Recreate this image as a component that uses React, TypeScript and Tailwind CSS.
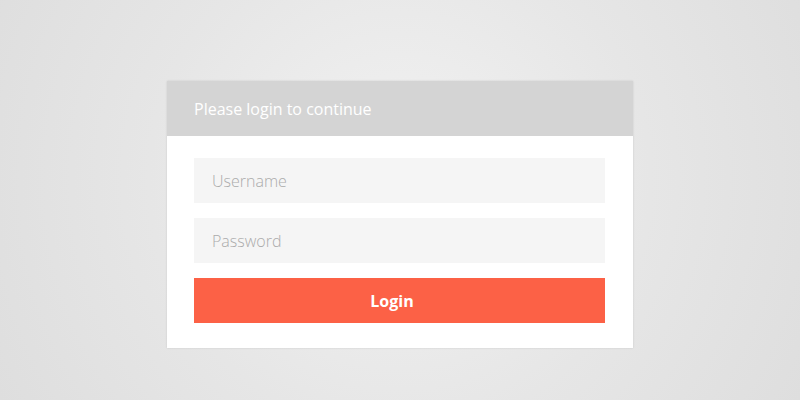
export default function App() {
  return (
    <main
      className="flex h-[400px] w-[800px] items-start justify-center bg-[radial-gradient(circle_at_50%_45%,#f2f2f2_0%,#e6e6e6_55%,#dedede_100%)] pt-[81px]"
      style={{ fontFamily: '"Open Sans", sans-serif' }}
    >
      <section className="w-[466px] bg-white shadow-[0_0_2px_rgba(0,0,0,0.12)]">
        <div className="flex h-[55px] items-center bg-[#d4d4d4] px-[27px]">
          <p className="text-[16px] text-white">Please login to continue</p>
        </div>
        <form className="flex flex-col gap-[15px] pl-[27px] pr-[28px] pt-[22px] pb-[25px]">
          <input
            type="text"
            placeholder="Username"
            className="h-[45px] w-full bg-[#f5f5f5] px-[18px] text-[16px] font-light text-gray-600 outline-none placeholder:text-[#ababab]"
          />
          <input
            type="password"
            placeholder="Password"
            className="h-[45px] w-full bg-[#f5f5f5] px-[18px] text-[16px] font-light text-gray-600 outline-none placeholder:text-[#ababab]"
          />
          <button
            type="button"
            className="h-[45px] w-full bg-[#fc6146] pr-[15px] text-[16px] font-bold text-white"
          >
            Login
          </button>
        </form>
      </section>
    </main>
  );
}
